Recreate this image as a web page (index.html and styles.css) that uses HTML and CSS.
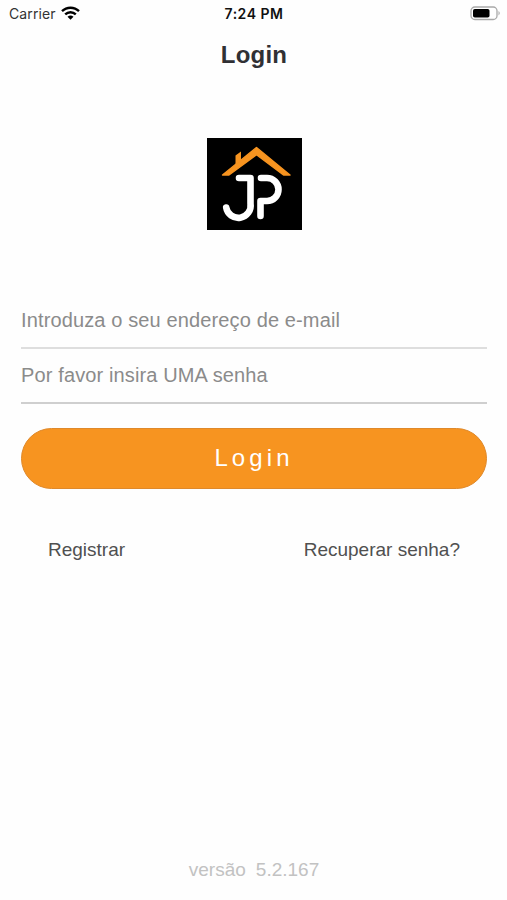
FILE: index.html
```html
<!DOCTYPE html>
<html lang="pt">
<head>
<meta charset="utf-8">
<meta name="viewport" content="width=device-width, initial-scale=1">
<title>Login</title>
<link rel="stylesheet" href="styles.css">
</head>
<body>
<div class="screen">
  <header class="status">
    <div class="carrier"><span class="carrier-name">Carrier</span>
      <svg class="wifi" width="19" height="14" viewBox="0 0 19 14" fill="none" stroke="#000" stroke-width="2.4">
        <path d="M1 5.2C5.8.5 13.2.5 18 5.2"/>
        <path d="M4.2 8.4C7.2 5.5 11.8 5.5 14.8 8.4"/>
        <path d="M9.5 13.8 6.5 10.8Q9.5 8.300 12.500 10.800Z" fill="#000" stroke="none"/>
      </svg>
    </div>
    <span class="time">7:24 PM</span>
    <svg class="battery" width="31" height="15" viewBox="0 0 31 15">
      <rect x="1" y="1" width="26" height="12.500" rx="3.800" fill="#fff" stroke="#a9a9a9" stroke-width="1.300"/>
      <rect x="3" y="3" width="16.500" height="8.500" rx="1.800" fill="#000"/>
      <path d="M28.500 5Q31 7.200 28.500 9.500Z" fill="#a9a9a9"/>
    </svg>
  </header>
  <h1 class="title">Login</h1>
  <svg class="logo" width="95" height="92" viewBox="0 0 95 92">
    <rect width="95" height="92" fill="#000"/>
    <path d="M15.500 37 49.500 9.500 83 37H76.500L49.500 16.800 22 37Z" fill="#f79420" stroke="#f79420" stroke-width="1.400" stroke-linejoin="round"/>
    <path d="M28.500 27V17.500L34 13.500V22.500Z" fill="#f79420"/>
    <g fill="none" stroke="#fff" stroke-width="6.600" stroke-linecap="round" stroke-linejoin="round">
      <path d="M32 40H43.500V65.500A12.300 12.300 0 0 1 19.200 69.500"/>
      <path d="M54 40H60A11.500 11.500 0 0 1 60 63H53.500V78"/>
    </g>
  </svg>
  <form class="form">
    <input class="field" type="email" placeholder="Introduza o seu endereço de e-mail">
    <input class="field field-password" type="password" placeholder="Por favor insira UMA senha">
    <button class="submit" type="button">Login</button>
  </form>
  <nav class="links">
    <a class="link register">Registrar</a>
    <a class="link recover">Recuperar senha?</a>
  </nav>
  <footer class="version"><span>versão</span><span>5.2.167</span></footer>
</div>
</body>
</html>
```
FILE: styles.css
```css
* { box-sizing: border-box; }
body {
  margin: 0;
  background: #fefefe;
  font-family: "Liberation Sans", Arial, sans-serif;
}
.screen {
  width: 507px;
  height: 900px;
  display: flex;
  flex-direction: column;
}
.status {
  height: 28px;
  padding: 0 6px 0 9px;
  display: grid;
  grid-template-columns: 1fr auto 1fr;
  align-items: center;
  font-family: Inter, sans-serif;
  font-size: 14px;
  line-height: 28px;
  color: #111;
}
.carrier { display: flex; align-items: center; gap: 5px; }
.carrier-name { letter-spacing: 0.1px; color: #333; }
.wifi { margin-top: -2px; }
.time { font-weight: 600; letter-spacing: 0.5px; margin-left: -2px; }
.battery { justify-self: end; margin-top: -1px; }
.title {
  margin: 12px 0 0;
  padding-left: 1px;
  font-size: 24px;
  line-height: 30px;
  text-align: center;
  color: #303034;
  letter-spacing: 0.2px;
}
.logo { margin: 68px auto 0 207px; flex: none; }
.form {
  margin: 64px 20px 0 21px;
  display: flex;
  flex-direction: column;
}
.field {
  height: 55px;
  padding: 0;
  border: 0;
  border-bottom: 2px solid #dedede;
  border-radius: 0;
  background: none;
  outline: none;
  font: 20px "Liberation Sans", Arial, sans-serif;
  letter-spacing: 0.13px;
}
.field-password { border-color: #cfcfcf; }
.field::placeholder { color: #8b8b8b; opacity: 1; }
.submit {
  height: 61px;
  margin-top: 24px;
  padding: 0 0 2px;
  border: 1px solid #df892b;
  border-radius: 31px;
  background: #f79420;
  color: #fff;
  font: 24px "Liberation Sans", Arial, sans-serif;
  letter-spacing: 4.1px;
}
.links {
  margin: 49px 47px 0 48px;
  display: flex;
  justify-content: space-between;
  font-size: 19px;
  line-height: 24px;
  color: #505050;
}
.version {
  margin: auto 0 18px;
  padding-left: 1px;
  display: flex;
  justify-content: center;
  gap: 10px;
  font-size: 19px;
  line-height: 24px;
  color: #c2c2c2;
}
```
